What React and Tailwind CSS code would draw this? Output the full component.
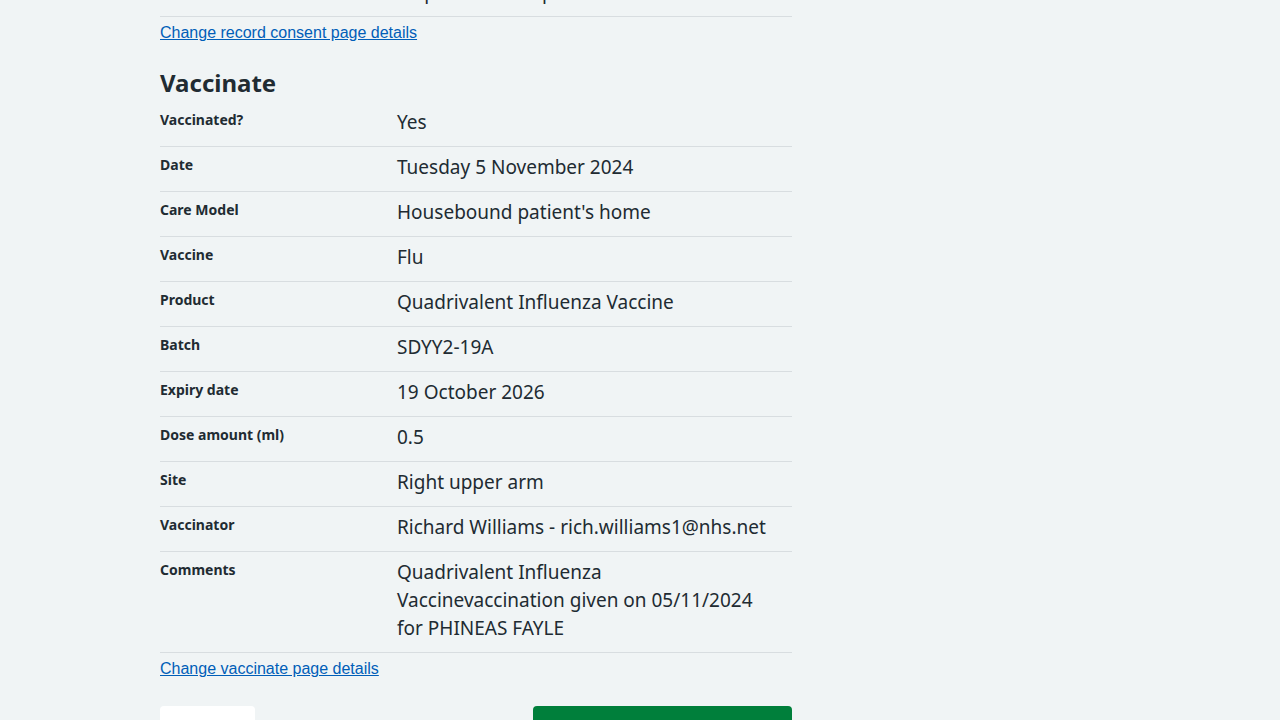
import React from "react";

// Rows of the "Vaccinate" summary list
const vaccinateRows = [
  { label: "Vaccinated?", value: "Yes" },
  { label: "Date", value: "Tuesday 5 November 2024" },
  { label: "Care Model", value: "Housebound patient's home" },
  { label: "Vaccine", value: "Flu" },
  { label: "Product", value: "Quadrivalent Influenza Vaccine" },
  { label: "Batch", value: "SDYY2-19A" },
  { label: "Expiry date", value: "19 October 2026" },
  { label: "Dose amount (ml)", value: "0.5" },
  { label: "Site", value: "Right upper arm" },
  { label: "Vaccinator", value: "Richard Williams - rich.williams1@nhs.net" },
  {
    label: "Comments",
    value:
      "Quadrivalent Influenza Vaccinevaccination given on 05/11/2024 for PHINEAS FAYLE",
  },
];

const SummaryRow = ({ label, value }) => (
  <div className="flex border-b border-[#d8dde0] pt-2 pb-2">
    <dt className="w-[237px] shrink-0 pr-4 text-[14px] leading-[20px] font-bold">
      {label}
    </dt>
    <dd className="-mt-[2px] mb-[2px] w-[372px] text-[19px] leading-[28px]">
      {value}
    </dd>
  </div>
);

const ChangeLink = ({ children }) => (
  <a
    href="#"
    className="mt-[4px] block w-fit text-[16px] leading-[24px] text-[#005eb8] underline font-['Liberation_Sans',Arial,sans-serif]"
  >
    {children}
  </a>
);

export default function App() {
  return (
    <div className="min-h-[720px] overflow-hidden bg-[#f0f4f5] text-[#212b32] font-['Noto_Sans',sans-serif]">
      <div className="mx-auto w-[960px] -mt-[56px]">
        <div className="w-[632px]">
          {/* Tail end of the previous (record consent) list */}
          <dl>
            <SummaryRow
              label="Consent given by"
              value="Patient, in person at the home visit, with help of a carer up to date"
            />
          </dl>
          <ChangeLink>Change record consent page details</ChangeLink>

          <h2 className="mt-[22px] mb-[3px] text-[24px] leading-[32px] font-bold">
            Vaccinate
          </h2>
          <dl>
            {vaccinateRows.map(row => (
              <SummaryRow key={row.label} label={row.label} value={row.value} />
            ))}
          </dl>
          <ChangeLink>Change vaccinate page details</ChangeLink>

          {/* Form actions */}
          <div className="mt-[25px] flex justify-between">
            <button className="h-[48px] w-[95px] rounded-[4px] bg-white text-[19px] font-semibold text-[#005eb8]">
              Back
            </button>
            <button className="h-[48px] w-[259px] rounded-[4px] bg-[#007f3b] text-[19px] font-semibold text-white">
              Confirm and save
            </button>
          </div>
        </div>
      </div>
    </div>
  );
}
